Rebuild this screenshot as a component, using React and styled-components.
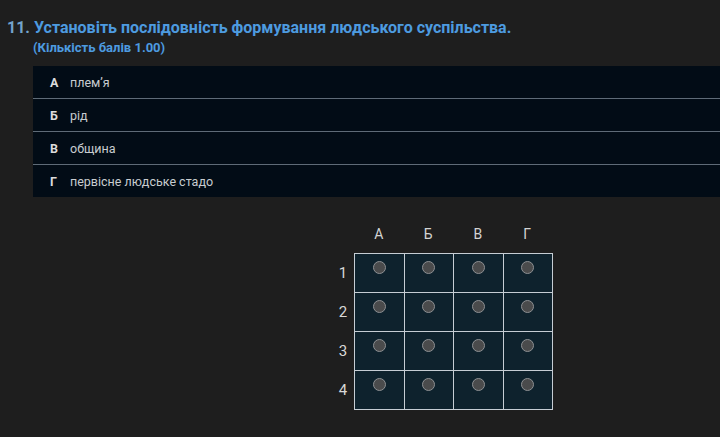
import React from "react";
import styled, { createGlobalStyle } from "styled-components";

const GlobalStyle = createGlobalStyle`
  html, body {
    margin: 0;
    padding: 0;
    background-color: #1e1e1e;
  }
  body {
    font-family: Roboto, "Noto Sans", "Liberation Sans", sans-serif;
    width: 720px;
    height: 437px;
    overflow: hidden;
  }
`;

const Page = styled.div`
  display: flex;
  flex-direction: column;
  padding-top: 18px;
`;

const Title = styled.div`
  display: flex;
  flex-direction: row;
  padding-left: 7px;
  font-size: 16px;
  font-weight: 700;
  line-height: 20px;
  color: #4d9be0;
`;

const Num = styled.span`
  color: #73a3cc;
  margin-right: 4px;
`;

const Points = styled.div`
  padding-left: 33px;
  margin-top: 1px;
  font-size: 13px;
  font-weight: 700;
  line-height: 18px;
  color: #4d9be0;
`;

const OptionList = styled.div`
  display: flex;
  flex-direction: column;
  margin-left: 33px;
  margin-top: 9px;
  background-color: #020c16;
`;

const Option = styled.div`
  display: flex;
  flex-direction: row;
  align-items: center;
  height: 32px;
  border-top: ${(p) => (p.first ? "none" : "1px solid #5f6b77")};
  font-size: 12.5px;
  color: #c8ccd0;
`;

const Letter = styled.span`
  width: 20px;
  padding-left: 17px;
  font-weight: 700;
  color: #dcdcdc;
`;

const Matrix = styled.div`
  display: flex;
  flex-direction: column;
  margin-left: 332px;
  margin-top: 27px;
`;

const HeaderRow = styled.div`
  display: grid;
  grid-template-columns: 22px repeat(4, 49.5px);
  height: 20px;
  margin-bottom: 9px;
`;

const HeadCell = styled.div`
  text-align: center;
  font-size: 14px;
  line-height: 20px;
  color: #d4d4d4;
`;

const Body = styled.div`
  display: flex;
  flex-direction: row;
`;

const Labels = styled.div`
  display: flex;
  flex-direction: column;
  width: 22px;
  padding-top: 1px;
`;

const Label = styled.div`
  height: 39px;
  line-height: 39px;
  text-align: center;
  font-size: 15px;
  color: #d8d8d8;
`;

const Board = styled.div`
  display: grid;
  grid-template-columns: repeat(4, 48.5px);
  grid-auto-rows: 38px;
  gap: 1px;
  border: 1px solid #c6cdd4;
  background-color: #c6cdd4;
`;

const Cell = styled.div`
  display: flex;
  justify-content: center;
  align-items: flex-start;
  padding-top: 7px;
  box-sizing: border-box;
  background-color: #0e222d;
`;

const Radio = styled.div`
  width: 11px;
  height: 11px;
  border-radius: 50%;
  background-color: #4a4b4c;
  border: 1.5px solid #8d9093;
`;

const options = [
  ["А", "плем’я"],
  ["Б", "рід"],
  ["В", "община"],
  ["Г", "первісне людське стадо"],
];

export default function App() {
  return (
    <Page>
      <GlobalStyle />
      <Title>
        <Num>11.</Num>
        Установіть послідовність формування людського суспільства.
      </Title>
      <Points>(Кількість балів 1.00)</Points>
      <OptionList>
        {options.map(([l, t], i) => (
          <Option key={l} first={i === 0}>
            <Letter>{l}</Letter>
            {t}
          </Option>
        ))}
      </OptionList>
      <Matrix>
        <HeaderRow>
          <span />
          {options.map(([l]) => (
            <HeadCell key={l}>{l}</HeadCell>
          ))}
        </HeaderRow>
        <Body>
          <Labels>
            {[1, 2, 3, 4].map((n) => (
              <Label key={n}>{n}</Label>
            ))}
          </Labels>
          <Board>
            {Array.from({ length: 16 }).map((_, i) => (
              <Cell key={i}>
                <Radio />
              </Cell>
            ))}
          </Board>
        </Body>
      </Matrix>
    </Page>
  );
}
